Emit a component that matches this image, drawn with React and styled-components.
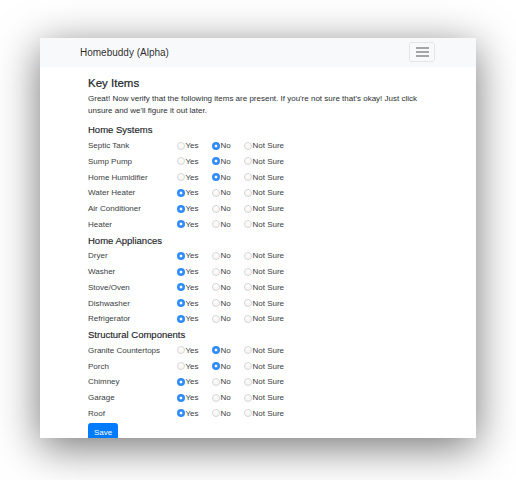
import React from 'react';
import styled, { createGlobalStyle } from 'styled-components';

const sections = [
  {
    title: 'Home Systems',
    items: [
      ['Septic Tank', 'no'],
      ['Sump Pump', 'no'],
      ['Home Humidifier', 'no'],
      ['Water Heater', 'yes'],
      ['Air Conditioner', 'yes'],
      ['Heater', 'yes'],
    ],
  },
  {
    title: 'Home Appliances',
    items: [
      ['Dryer', 'yes'],
      ['Washer', 'yes'],
      ['Stove/Oven', 'yes'],
      ['Dishwasher', 'yes'],
      ['Refrigerator', 'yes'],
    ],
  },
  {
    title: 'Structural Components',
    items: [
      ['Granite Countertops', 'no'],
      ['Porch', 'no'],
      ['Chimney', 'yes'],
      ['Garage', 'yes'],
      ['Roof', 'yes'],
    ],
  },
];

const options = [
  ['yes', 'Yes'],
  ['no', 'No'],
  ['unsure', 'Not Sure'],
];

const App = () => {
  return (
    <Desktop>
      <GlobalStyle />
      <Window>
        <Navbar>
          <Brand href="/">Homebuddy (Alpha)</Brand>
          <Toggler type="button" aria-label="Toggle navigation">
            <svg width="13" height="10" viewBox="0 0 13 10">
              <path d="M0 1h13M0 5h13M0 9h13" stroke="rgba(0,0,0,0.45)" strokeWidth="1.3" />
            </svg>
          </Toggler>
        </Navbar>
        <Main>
          <Title>Key Items</Title>
          <Intro>
            Great! Now verify that the following items are present. If you're not sure that's okay! Just click
            unsure and we'll figure it out later.
          </Intro>
          {sections.map((section) => (
            <React.Fragment key={section.title}>
              <SectionTitle>{section.title}</SectionTitle>
              {section.items.map(([name, value]) => (
                <Row key={name}>
                  <ItemName>{name}</ItemName>
                  {options.map(([key, label]) => (
                    <Option key={key}>
                      <Radio type="radio" name={name} checked={value === key} readOnly />
                      {label}
                    </Option>
                  ))}
                </Row>
              ))}
            </React.Fragment>
          ))}
          <SaveButton type="button">Save</SaveButton>
        </Main>
      </Window>
    </Desktop>
  );
};

export default App;

const GlobalStyle = createGlobalStyle`
  body {
    margin: 0;
    background: #ffffff;
    font-family: "Liberation Sans", Arial, sans-serif;
    color: #2b2f33;
  }
`;

const Desktop = styled.div`
  height: 480px;
  padding: 37.5px 40px 0;
  box-sizing: border-box;
  overflow: hidden;
`;

const Window = styled.div`
  width: 436px;
  height: 400.5px;
  background: #fff;
  box-shadow: 0 9px 40px rgba(0, 0, 0, 0.55);
  overflow: hidden;
`;

const Navbar = styled.nav`
  display: flex;
  justify-content: space-between;
  align-items: center;
  height: 29.5px;
  padding: 0 41px 0 40px;
  background-color: #f8f9fa;
`;

const Brand = styled.a`
  font-size: 10px;
  color: rgba(0, 0, 0, 0.85);
  text-decoration: none;
`;

const Toggler = styled.button`
  display: flex;
  align-items: center;
  justify-content: center;
  width: 26px;
  height: 20px;
  padding: 0;
  background: transparent;
  border: 1px solid rgba(0, 0, 0, 0.08);
  border-radius: 2.5px;
`;

const Main = styled.main`
  padding: 0 48px;
`;

const Title = styled.h4`
  margin: 9px 0 3px;
  font-size: 11.5px;
  font-weight: 400;
  line-height: 14px;
  color: #212529;
  -webkit-text-stroke: 0.2px #212529;
`;

const Intro = styled.p`
  margin: 0 0 5px;
  font-size: 8px;
  line-height: 12px;
`;

const SectionTitle = styled.h5`
  margin: 0;
  height: 15.75px;
  display: flex;
  align-items: center;
  font-size: 9.5px;
  font-weight: 400;
  color: #212529;
  -webkit-text-stroke: 0.15px #212529;
`;

const Row = styled.div`
  display: grid;
  grid-template-columns: 88.5px 35px 32px auto;
  align-items: center;
  height: 15.75px;
  font-size: 8px;
`;

const ItemName = styled.span`
  color: #3a3e42;
`;

const Option = styled.label`
  display: flex;
  align-items: center;
  color: #3a3e42;
`;

const Radio = styled.input`
  appearance: none;
  flex: none;
  margin: 0 1px 0 0;
  width: 8px;
  height: 8px;
  border-radius: 50%;
  box-sizing: border-box;
  border: 1px solid #d6d6d6;
  background: linear-gradient(#ffffff, #f4f4f4);

  &:checked {
    border: none;
    background: radial-gradient(circle, #ffffff 0 1.2px, #2f8cf9 1.7px);
  }
`;

const SaveButton = styled.button`
  margin-top: 1px;
  width: 30px;
  height: 19px;
  padding: 0;
  font-family: inherit;
  font-size: 8px;
  color: #fff;
  background-color: #007bff;
  border: 1px solid #007bff;
  border-radius: 2.5px;
`;
